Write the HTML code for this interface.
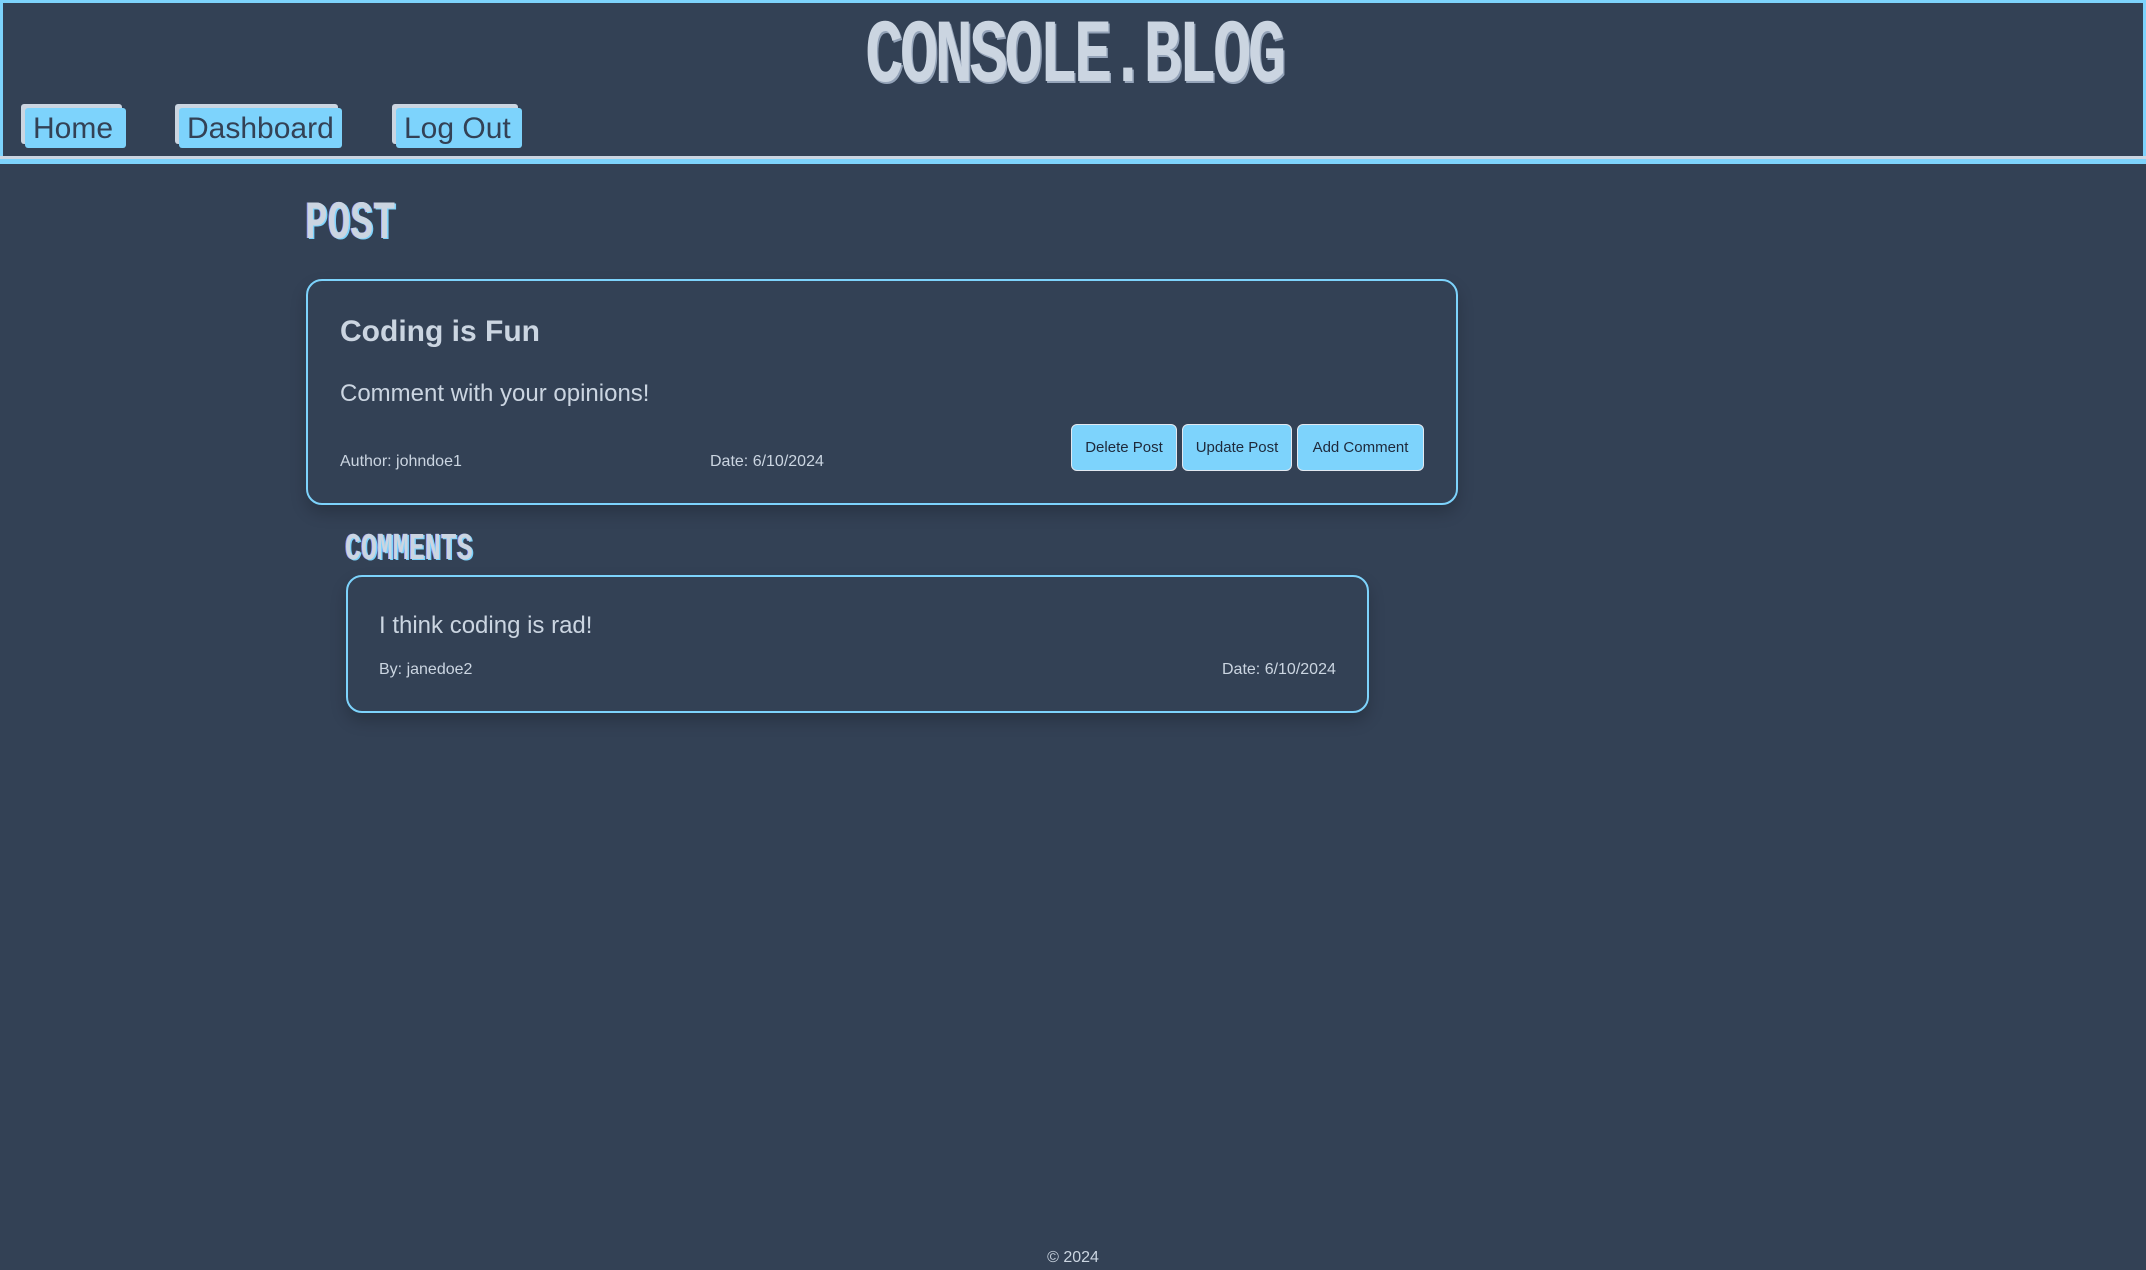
<!DOCTYPE html>
<html><head><meta charset="utf-8"><style>
*{box-sizing:border-box;margin:0;padding:0}
html,body{width:2146px;height:1270px;background:#334155;overflow:hidden;font-family:"Liberation Sans",sans-serif;color:#cbd5e1}
header{position:absolute;left:0;top:0;width:2146px;height:161px;border:3px solid #7dd3fc;border-bottom:none}
header:after{content:"";position:absolute;left:-3px;right:-3px;top:153px;height:5px;background:#7dd3fc;border-top:3px solid #cbd5e1}
.logo{position:absolute;left:0;width:2140px;top:4px;text-align:center;font-family:"Liberation Mono",monospace;font-weight:bold;font-size:90px;letter-spacing:-5px;color:#cbd5e1;transform:scaleX(0.71);transform-origin:1073px 0;text-shadow:2px 2px 0 #94a3b8}
.nav{position:absolute;top:105px;height:40px;background:#7dd3fc;color:#334155;font-size:30px;line-height:42px;padding:0 8px;border-radius:3px;box-shadow:-4px -4px 0 #cbd5e1}
.h{position:absolute;font-family:"Liberation Mono",monospace;font-weight:bold;color:#cbd5e1;transform:scaleX(0.7);transform-origin:0 0;text-shadow:2px 1px 0 #7dd3fc,-1px 0 0 #818cf8}
.card{position:absolute;border:2px solid #7dd3fc;border-radius:16px;box-shadow:0 8px 16px rgba(0,0,0,.2)}
.t{position:absolute;white-space:nowrap}
.btn{position:absolute;top:424px;height:47px;background:#7dd3fc;border:1px solid #e2e8f0;border-radius:6px;color:#1e293b;font-size:15px;line-height:45px;text-align:center}
</style></head><body>
<header>
<div class="logo">CONSOLE.BLOG</div>
<div class="nav" style="left:22px;width:101px">Home</div>
<div class="nav" style="left:176px;width:163px">Dashboard</div>
<div class="nav" style="left:393px;width:126px">Log Out</div>
</header>
<div class="h" style="left:305px;top:194px;font-size:54px">POST</div>
<div class="card" style="left:306px;top:279px;width:1152px;height:226px"></div>
<div class="t" style="left:340px;top:315px;font-size:30px;font-weight:bold">Coding is Fun</div>
<div class="t" style="left:340px;top:380px;font-size:24px">Comment with your opinions!</div>
<div class="t" style="left:340px;top:453px;font-size:16px">Author: johndoe1</div>
<div class="t" style="left:710px;top:453px;font-size:16px">Date: 6/10/2024</div>
<div class="btn" style="left:1071px;width:106px">Delete Post</div>
<div class="btn" style="left:1182px;width:110px">Update Post</div>
<div class="btn" style="left:1297px;width:127px">Add Comment</div>
<div class="h" style="left:345px;top:528px;font-size:38px">COMMENTS</div>
<div class="card" style="left:346px;top:575px;width:1023px;height:138px"></div>
<div class="t" style="left:379px;top:612px;font-size:24px">I think coding is rad!</div>
<div class="t" style="left:379px;top:661px;font-size:16px">By: janedoe2</div>
<div class="t" style="left:1222px;top:661px;font-size:16px">Date: 6/10/2024</div>
<div class="t" style="left:0;width:2146px;text-align:center;top:1249px;font-size:16px">© 2024</div>
</body></html>
